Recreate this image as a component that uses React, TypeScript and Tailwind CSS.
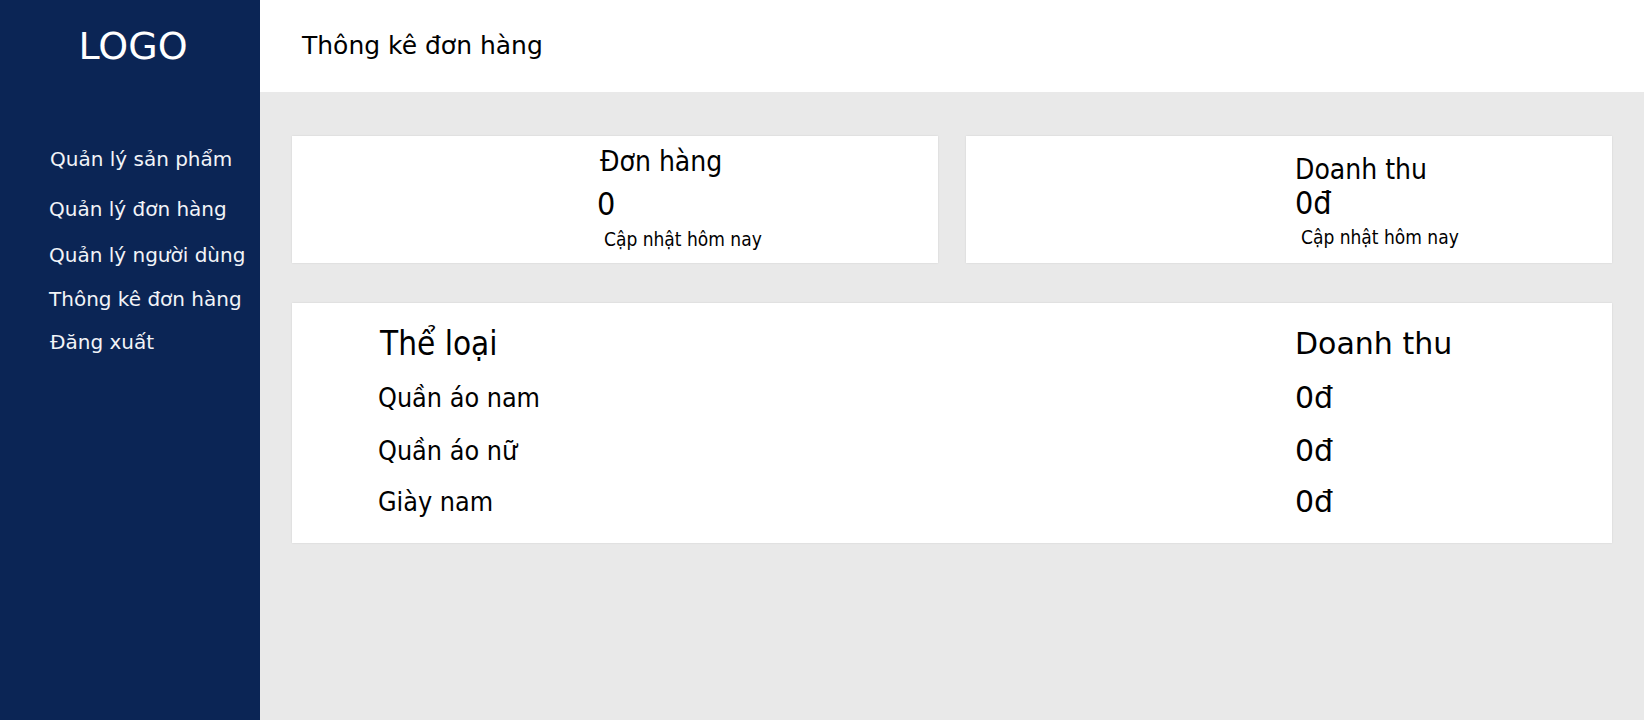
import React from 'react';

const sans = "font-['DejaVu_Sans',sans-serif]";
const cond = "font-['DejaVu_Sans_Condensed','DejaVu_Sans',sans-serif] font-stretch-condensed";

const menu = [
  { label: 'Quản lý sản phẩm', cls: 'mt-[55px] ml-px' },
  { label: 'Quản lý đơn hàng', cls: 'mt-[26px]' },
  { label: 'Quản lý người dùng', cls: 'mt-[22px]' },
  { label: 'Thông kê đơn hàng', cls: 'mt-[20px]' },
  { label: 'Đăng xuất', cls: 'mt-[19px] ml-px' },
];

const rows = [
  { name: 'Quần áo nam', value: '0đ', cls: 'mt-[14px]' },
  { name: 'Quần áo nữ', value: '0đ', cls: 'mt-[13px]' },
  { name: 'Giày nam', value: '0đ', cls: 'mt-[11px]' },
];

const Sidebar = () => (
  <aside className="w-[260px] shrink-0 bg-[#0b2555] text-[#f2f4f8]">
    <div className="flex h-[92px] items-center justify-center pl-[6px] text-[38px] text-white">LOGO</div>
    <nav className="flex flex-col pl-[49px]">
      {menu.map((m) => (
        <a key={m.label} className={`block text-[20px] leading-[24px] ${m.cls}`}>
          {m.label}
        </a>
      ))}
    </nav>
  </aside>
);

const StatCard = ({
  title,
  value,
  pad,
  titleTop,
  valueCls,
  subCls,
}: {
  title: string;
  value: string;
  pad: string;
  titleTop: string;
  valueCls: string;
  subCls: string;
}) => (
  <div className={`h-[127px] bg-white shadow-[0_0_2px_rgba(0,0,0,0.1)] ${pad} ${titleTop} ${cond}`}>
    <div className="text-[28px] leading-[30px]">{title}</div>
    <div className={`text-[32px] leading-[30px] ${valueCls}`}>{value}</div>
    <div className={`text-[19px] leading-[24px] ${subCls}`}>Cập nhật hôm nay</div>
  </div>
);

export default function App() {
  return (
    <div className={`flex h-[720px] w-full overflow-hidden text-black ${sans}`}>
      <Sidebar />
      <div className="flex min-w-0 flex-1 flex-col">
        <header className="flex h-[92px] shrink-0 items-center bg-white pl-[42px] text-[25px]">
          Thông kê đơn hàng
        </header>
        <main className="flex-1 bg-[#e9e9e9] px-[32px] pt-[44px]">
          <div className="grid grid-cols-2 gap-[28px]">
            <StatCard
              title="Đơn hàng"
              value="0"
              pad="pl-[308px]"
              titleTop="pt-[11px]"
              valueCls="mt-[12px] -ml-[3px]"
              subCls="mt-[8px] pl-[4px]"
            />
            <StatCard
              title="Doanh thu"
              value="0đ"
              pad="pl-[329px]"
              titleTop="pt-[19px]"
              valueCls="mt-[3px]"
              subCls="mt-[7px] pl-[6px]"
            />
          </div>
          <section className="mt-[40px] h-[240px] bg-white pt-[21px] shadow-[0_0_2px_rgba(0,0,0,0.1)]">
            <div className="grid grid-cols-[1003px_1fr] items-center">
              <div className={`pl-[88px] text-[33px] leading-[40px] ${cond}`}>Thể loại</div>
              <div className="text-[30px] leading-[40px]">Doanh thu</div>
            </div>
            {rows.map((r) => (
              <div key={r.name} className={`grid grid-cols-[1003px_1fr] items-center ${r.cls}`}>
                <div className={`pl-[86px] text-[26.7px] leading-[40px] ${cond}`}>{r.name}</div>
                <div className="text-[30px] leading-[40px]">{r.value}</div>
              </div>
            ))}
          </section>
        </main>
      </div>
    </div>
  );
}
